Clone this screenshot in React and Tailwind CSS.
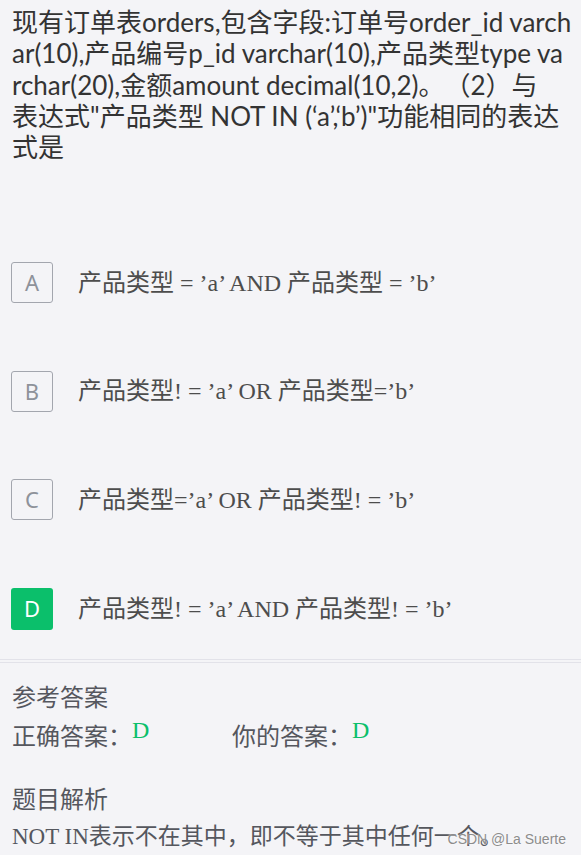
export default function App() {
  const qLines = [
    "现有订单表orders,包含字段:订单号order_id varch",
    "ar(10),产品编号p_id varchar(10),产品类型type va",
    "rchar(20),金额amount decimal(10,2)。（2）与",
    "表达式\"产品类型 NOT IN (‘a’,‘b’)\"功能相同的表达",
    "式是",
  ];
  const options = [
    { k: "A", t: "产品类型 = ’a’ AND 产品类型 = ’b’", on: false },
    { k: "B", t: "产品类型! = ’a’ OR 产品类型=’b’", on: false },
    { k: "C", t: "产品类型=’a’ OR 产品类型! = ’b’", on: false },
    { k: "D", t: "产品类型! = ’a’ AND 产品类型! = ’b’", on: true },
  ];
  return (
    <div className="relative min-h-[855px] w-full overflow-hidden bg-[#f4f4f7]">
      <div className="px-[12px] pt-[7px] text-[26px] leading-[31.25px] text-[#333333] font-['Lato','Noto_Sans_CJK_SC',sans-serif] [text-spacing-trim:space-all]">
        {qLines.map((l, i) => (
          <div key={i} className="whitespace-pre">{l}</div>
        ))}
      </div>

      <div className="mt-[99px] flex flex-col gap-[67.5px]">
        {options.map((o) => (
          <div key={o.k} className="flex items-center pl-[11px]">
            <div
              className={
                o.on
                  ? "flex h-[42px] w-[42px] items-center justify-center rounded-[3px] bg-[#0bbf6b] text-[22px] text-white font-['Noto_Sans',sans-serif]"
                  : "flex h-[41px] w-[42px] items-center justify-center rounded-[3px] border border-[#a3a6ae] text-[22px] text-[#8e929a] font-['Noto_Sans',sans-serif]"
              }
            >
              {o.k}
            </div>
            <div className="ml-[25px] whitespace-pre text-[24px] text-[#4d4d4d] font-['Liberation_Serif','Noto_Sans_CJK_SC',serif]">
              {o.t}
            </div>
          </div>
        ))}
      </div>

      <div className="mt-[29px] h-[4px] border-y border-[#e2e2e9]" />

      <div className="px-[12px] pt-[13.5px] text-[24px] leading-[39px] text-[#55575e] font-['Noto_Sans_CJK_SC',sans-serif]">
        <div>参考答案</div>
        <div className="flex">
          <div className="flex w-[220px] items-start">
            <span>正确答案：</span>
            <span className="-mt-[4px] text-[24px] text-[#0bbf6b] font-['Liberation_Serif',serif]">D</span>
          </div>
          <div className="flex items-start">
            <span>你的答案：</span>
            <span className="-mt-[4px] text-[24px] text-[#0bbf6b] font-['Liberation_Serif',serif]">D</span>
          </div>
        </div>
        <div className="mt-[24px]">题目解析</div>
        <div className="whitespace-pre text-[23px] font-['Liberation_Serif','Noto_Sans_CJK_SC',serif]">
          NOT IN表示不在其中，即不等于其中任何一个。
        </div>
      </div>

      <div className="absolute bottom-[6px] right-[15px] text-[14px] text-[#8c8c8c] font-['Liberation_Sans',sans-serif] [text-shadow:0_0_2px_#ffffff]">
        CSDN @La Suerte
      </div>
    </div>
  );
}
